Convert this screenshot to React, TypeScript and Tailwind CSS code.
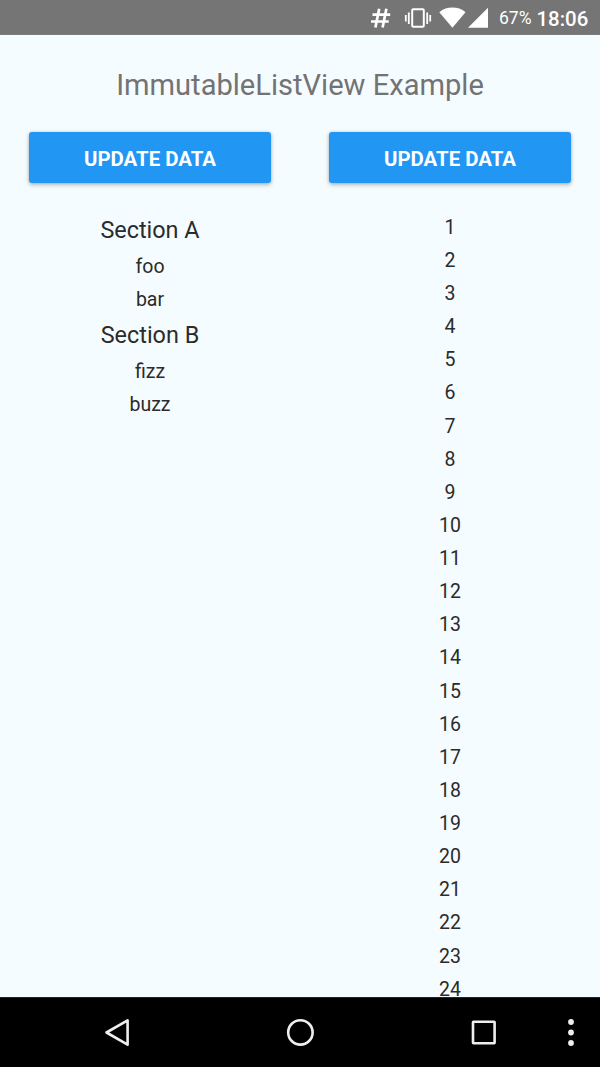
import React from "react";

const numbers = Array.from({ length: 24 }, (_, i) => String(i + 1));

const sections = [
  { title: "Section A", rows: ["foo", "bar"] },
  { title: "Section B", rows: ["fizz", "buzz"] },
];

function StatusBar() {
  return (
    <header className="flex h-[35px] shrink-0 items-center border-b border-[#7c7e7e] bg-[#757575] text-white">
      <svg className="shrink-0" width="490" height="35" viewBox="0 0 490 35" fill="none">
        <path
          d="M379.200 8.700 375.400 27.500M386.400 8.700 382.600 27.500M372.500 14.600H390.200M371 21.500H388.700"
          stroke="white"
          strokeWidth="2.700"
        />
        <rect x="412.200" y="9.200" width="11.600" height="17.600" rx="1" stroke="white" strokeWidth="2" />
        <path d="M408.800 12.500V24M405.800 15V21.500M427.200 12.500V24M430.200 15V21.500" stroke="white" strokeWidth="1.800" />
        <path d="M439.300 12.200C443 9 447.600 7.600 452.400 7.600S461.800 9 465.500 12.200L452.400 27.700Z" fill="white" />
        <path d="M488 7.800V27.700H468Z" fill="white" />
      </svg>
      <span className="ml-[9px] w-[37.5px] pt-[4px] text-[17.5px] leading-none">67%</span>
      <span className="pt-[4px] text-[20.4px] leading-none font-medium">18:06</span>
    </header>
  );
}

function UpdateButton() {
  return (
    <button className="mx-[29px] mb-[27.3px] flex h-[51px] items-center justify-center rounded-[3px] bg-[#2196f3] pt-[3px] text-[20.4px] leading-none font-bold text-white shadow-[0_2px_4px_rgba(0,0,0,0.25),0_0_3px_rgba(0,0,0,0.15)]">
      UPDATE DATA
    </button>
  );
}

function Row({ children }: { children: React.ReactNode }) {
  return <div className="flex h-[33.13px] shrink-0 items-center justify-center text-[19.5px] leading-[29px]">{children}</div>;
}

function NavigationBar() {
  return (
    <nav className="h-[70px] shrink-0 border-t border-[#222] bg-black">
      <svg width="600" height="69" viewBox="0 998 600 69" fill="none" stroke="#eee" strokeWidth="2.6">
        <path d="M127.600 1020.300V1044.700L106.500 1032.500Z" strokeLinejoin="round" />
        <circle cx="300.400" cy="1032.400" r="12.200" />
        <rect x="473" y="1021.700" width="21.600" height="21.600" rx="0.500" />
        <g fill="#eee" stroke="none">
          <circle cx="571" cy="1022" r="2.900" />
          <circle cx="571" cy="1032.500" r="2.900" />
          <circle cx="571" cy="1043" r="2.900" />
        </g>
      </svg>
    </nav>
  );
}

export default function App() {
  return (
    <div className="flex h-[1067px] w-[600px] flex-col overflow-hidden bg-[#f5fcff] font-['Roboto',sans-serif] text-[#2b2b2b]">
      <StatusBar />
      <main className="flex min-h-0 flex-1 flex-col">
        <h1 className="flex h-[97.4px] shrink-0 items-center justify-center pt-[3.6px] text-[29.1px] leading-none text-[#737373]">
          ImmutableListView Example
        </h1>
        <div className="grid min-h-0 flex-1 grid-cols-2">
          <section className="flex flex-col">
            <UpdateButton />
            {sections.map((section) => (
              <React.Fragment key={section.title}>
                <h2 className="flex h-[39px] shrink-0 items-center justify-center text-[23.4px]">{section.title}</h2>
                {section.rows.map((row) => (
                  <Row key={row}>{row}</Row>
                ))}
              </React.Fragment>
            ))}
          </section>
          <section className="flex flex-col">
            <UpdateButton />
            {numbers.map((n) => (
              <Row key={n}>{n}</Row>
            ))}
          </section>
        </div>
      </main>
      <NavigationBar />
    </div>
  );
}
